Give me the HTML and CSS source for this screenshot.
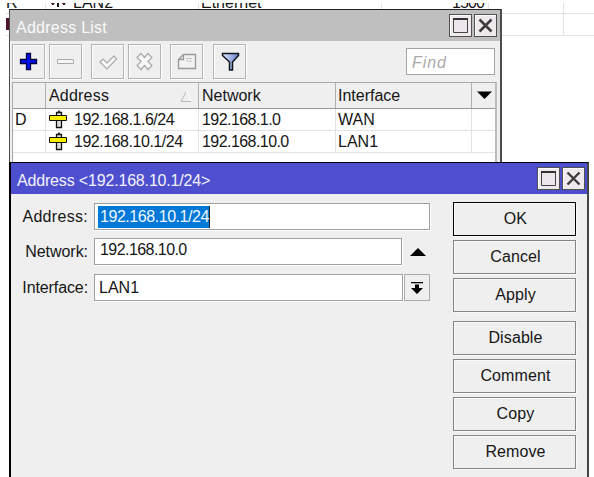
FILE: index.html
```html
<!DOCTYPE html>
<html lang="en">
<head>
<meta charset="utf-8">
<title>Address List</title>
<link rel="stylesheet" href="styles.css">
</head>
<body>
<div class="desktop">
  <div class="backdrop">
    <div class="back-row"><span class="b1">R</span><span class="b2"><svg width="20" height="14"><path d="M1 4h7l-3 5zM12 4h7l-3 5z" fill="#a00028" stroke="#111"/><path d="M10 5v6" stroke="#111" stroke-width="2"/></svg>LAN2</span><span class="b3">Ethernet</span><span class="b4">1500</span><span class="b5"></span><span></span></div>
    <div class="back-row second"><span class="marker"></span><span class="b2"></span><span class="b3"></span><span class="b4"></span><span class="b5"></span><span></span></div>
  </div>

  <section class="window list-window">
    <header class="titlebar"><span class="title">Address List</span>
      <button class="winbtn"><svg width="21" height="21"><path d="M3.500 3.500h14v14h-14z" fill="#ece6ea" stroke="#444"/><path d="M3 4h15" stroke="#333" stroke-width="2"/></svg></button>
      <button class="winbtn"><svg width="21" height="21"><path d="M4.500 4.500l12 12M16.500 4.500l-12 12" stroke="#3c3c3c" stroke-width="2.600"/></svg></button>
    </header>
    <div class="toolbar">
      <button class="tool"><svg width="31" height="33"><path d="M13.500 8.500h4v6h6v4h-6v6h-4v-6h-6v-4h6z" fill="#0010f0" stroke="#000040" stroke-width="1.300"/></svg></button>
      <button class="tool"><svg width="31" height="33"><path d="M7.500 14.500h16v4h-16z" fill="#f6f6f6" stroke="#aaa"/></svg></button>
      <button class="tool gap"><svg width="31" height="33"><path d="M8 17l3-3 4 4 7-7 2.500 3-9.500 10z" fill="#f7f7f7" stroke="#aaa" stroke-width="1.200"/></svg></button>
      <button class="tool"><svg width="31" height="33"><path d="M8 12.500l4-4 3.500 4 3.500-4 4 4-4 4 4 4-4 4-3.500-4-3.500 4-4-4 4-4z" fill="#f7f7f7" stroke="#aaa" stroke-width="1.200"/></svg></button>
      <button class="tool gap"><svg width="31" height="33"><path d="M7.500 14.500l5-5h12v14h-17zM7.500 14.500h5v-5" fill="#f2f2f2" stroke="#999" stroke-width="1.300"/><path d="M15.500 13.500h6M15.500 16h6" stroke="#aaa" stroke-dasharray="2 1"/></svg></button>
      <button class="tool filter"><svg width="31" height="33"><defs><linearGradient id="f"><stop stop-color="#e0eaff"/><stop offset="1" stop-color="#6480cc"/></linearGradient></defs><path d="M8.500 8.500h16v2l-6 6.500v8h-3v-8l-7-6.500z" fill="url(#f)" stroke="#10141c" stroke-width="1.500"/></svg></button>
      <span class="find">Find</span>
    </div>
    <div class="table">
      <div class="row head"><span></span><span class="w-address">Address<svg class="sort" width="12" height="12"><path d="M11.500 11.500H1L6.500 1" fill="none" stroke="#b8b8b8"/><path d="M6.500 1l5 10.500" stroke="#fff"/></svg></span><span class="w-network">Network</span><span class="w-interface">Interface</span><span class="drop"><svg width="16" height="9"><path d="M0 .5h15L7.500 8z"/></svg></span></div>
      <div class="row"><span>D</span><span class="addr"><svg width="19" height="20"><path d="M7.500 2.500h5v15h-5z" fill="#ddd" stroke="#111" stroke-width="1.300"/><path d="M10 .5v2" stroke="#333" stroke-width="2"/><path d="M.5 5.500h17v5H.5z" fill="#f8ee00" stroke="#111"/></svg><b class="ip6">192.168.1.6/24</b></span><span class="ipn">192.168.1.0</span><span>WAN</span><span></span></div>
      <div class="row"><span></span><span class="addr"><svg width="19" height="20"><path d="M7.500 2.500h5v15h-5z" fill="#ddd" stroke="#111" stroke-width="1.300"/><path d="M10 .5v2" stroke="#333" stroke-width="2"/><path d="M.5 5.500h17v5H.5z" fill="#f8ee00" stroke="#111"/></svg><b class="ip6">192.168.10.1/24</b></span><span class="ipn">192.168.10.0</span><span>LAN1</span><span></span></div>
    </div>
  </section>

  <section class="window edit-window">
    <header class="titlebar"><span class="title">Address &lt;192.168.10.1/24&gt;</span>
      <button class="winbtn"><svg width="21" height="21"><path d="M3.500 3.500h14v14h-14z" fill="#ece6ea" stroke="#444"/><path d="M3 4h15" stroke="#333" stroke-width="2"/></svg></button>
      <button class="winbtn"><svg width="21" height="21"><path d="M4.500 4.500l12 12M16.500 4.500l-12 12" stroke="#3c3c3c" stroke-width="2.400"/></svg></button>
    </header>
    <div class="content">
      <div class="form">
        <div class="field"><label class="l-addr">Address:</label><span class="input"><span class="selected">192.168.10.1/24</span></span></div>
        <div class="field"><label class="l-net">Network:</label><span class="input up-one ipn">192.168.10.0</span><svg class="up" width="28" height="10"><path d="M8 9h16L16 1z"/></svg></div>
        <div class="field"><label class="l-int">Interface:</label><span class="input wide">LAN1</span><button class="pick"><svg width="24" height="25"><path d="M6 7h12v1.200H6zM10 9.500h4v3.500h4L12 19l-6-6h4z"/></svg></button></div>
      </div>
      <div class="actions">
        <button class="default">OK</button><button>Cancel</button><button>Apply</button>
        <button class="group">Disable</button><button>Comment</button><button>Copy</button><button>Remove</button>
      </div>
    </div>
  </section>
</div>
</body>
</html>
```

FILE: styles.css
```css
* { box-sizing: border-box; }
body { margin: 0; background: #fff; color: #161616; font: 16px/20px "Liberation Sans", Arial, sans-serif; overflow: hidden; }
button { font: inherit; color: inherit; padding: 0; margin: 0; background: #efefef; }
svg { display: block; flex: none; }
.desktop { position: relative; width: 594px; height: 477px; overflow: hidden; }

.backdrop { padding-top: 3px; padding-left: 6px; }
.back-row { display: grid; grid-template-columns: 40px 153px 183px 107px 75px 1fr; height: 11px; overflow: hidden; border-bottom: 1px solid #e2e2e2; }
.back-row span { display: flex; align-items: center; border-right: 1px solid #e2e2e2; height: 100%; overflow: hidden; line-height: 18px; }
.back-row:first-child span { height: 24px; margin-top: -12px; }
.back-row.second { height: 22px; }
.back-row .marker { height: 12px; margin-top: 4px; border-left: 3px solid #4a1030; }
.back-row .b2 { padding-left: 2px; gap: 5px; }
.back-row .b3 { padding-left: 2px; }
.back-row .b4 { justify-content: flex-end; padding-right: 4px; letter-spacing: -.9px; }
.back-row span:last-child { border: 0; }

.window { position: absolute; left: 9px; background: #efefef; }
.list-window { top: 9px; width: 493px; height: 170px; border: 2px solid #4c4c4c; border-top: 1px solid #222; border-left-width: 1px; }
.edit-window { top: 162px; width: 580px; height: 330px; border: 2px solid #000; border-top-width: 1px; border-right-color: #444; }

.titlebar { display: flex; align-items: center; height: 31px; padding: 0 3px 0 6px; background: #bfbfbf; color: #fafafa; }
.edit-window .titlebar { background: #4e4fce; padding-right: 2px; color: #f3f3ff; }
.title { margin-right: auto; padding-top: 4px; }
.list-window .title { letter-spacing: .25px; }
.edit-window .title { letter-spacing: -.17px; }
.winbtn { width: 23px; height: 23px; margin-left: 2px; border: 1px solid #505050; background: #eee9ed; box-shadow: inset 1px 1px #fff; }

.toolbar { display: flex; gap: 4px; height: 41px; padding: 3px 5px 0 2px; }
.tool { width: 33px; height: 35px; border: 1px solid #b4b4b4; box-shadow: inset 1px 1px #fff, 1px 1px #fff; }
.tool.gap { margin-left: 5px; }
.tool.filter { margin-left: 6px; }
.find { width: 89px; height: 27px; margin: 4px 0 0 auto; padding: 4px 5px; border: 1px solid #a4a4a4; background: #fff; font-style: italic; letter-spacing: .9px; color: #aaa; }

.table { width: 485px; height: 90px; margin-left: 2px; border: 1px solid #a9a9a9; border-right: 2px solid #bbb; background: #fff; }
.row { display: grid; grid-template-columns: 33px 153px 137px 136px 1fr; height: 22px; border-bottom: 1px solid #e2e2e2; }
.row > span { display: flex; align-items: center; padding-left: 3px; border-right: 1px solid #e2e2e2; white-space: nowrap; }
.row > span:first-child { padding-left: 2px; }
.row > span:nth-child(4) { padding-left: 2px; }
.row > span:last-child { border-right: 0; }
.row.head { height: 26px; background: #efefef; border-color: #999; }
.row.head > span { border-color: #b0b0b0; padding-top: 1px; }
.row.head > .w-address { letter-spacing: .2px; }
.row.head .drop { padding: 0 0 0 5px; }
.sort { margin-left: auto; margin-right: 6px; }
.row > .addr { gap: 6px; }
.addr b { font-weight: normal; }
.ip6 { letter-spacing: -.47px; }
.ipn { letter-spacing: -.56px; }

.content { display: flex; justify-content: space-between; padding: 8px 11px 0 0; }
.form { display: grid; grid-auto-rows: 27px; row-gap: 8px; padding-top: 1px; width: 419px; }
.field { display: flex; align-items: center; }
.field label { width: 83px; padding-right: 6px; text-align: right; }
.l-addr { letter-spacing: .3px; }
.l-net { letter-spacing: -.05px; }
.l-int { letter-spacing: -.1px; }
.input { flex: 1; height: 27px; padding: 3px 4px 0; border: 1px solid #a0a0a0; background: #fff; box-shadow: 1px 1px #fff; }
.input.wide { margin-right: 1px; }
.field:last-child { margin-top: 1px; height: 27px; }
.up-one { padding-top: 1px; padding-left: 5px; }
.selected { display: inline-block; height: 22px; margin: -1px 0 0 -1px; padding: 1px 0 0 2px; background: #0078d7; color: #eef7ff; border-right: 1px solid #222; letter-spacing: -.45px; }
.pick { width: 26px; height: 27px; border: 1px solid #aaa; }
.actions { display: flex; flex-direction: column; gap: 4px; width: 123px; }
.actions button { height: 34px; border: 1px solid #858585; box-shadow: inset 1px 1px #fafafa, 1px 1px #fafafa; padding-left: 2px; letter-spacing: .1px; }
.actions .default { border-color: #000; }
.actions .group { margin-top: 5px; }
```
